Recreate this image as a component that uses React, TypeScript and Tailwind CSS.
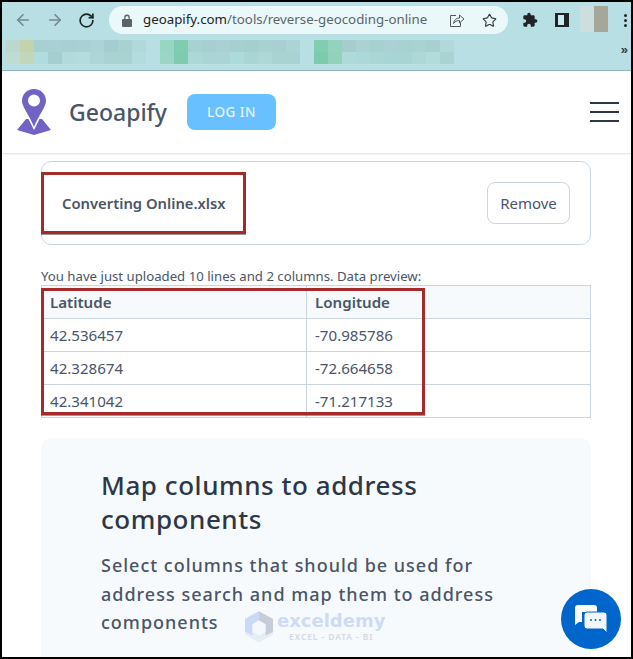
import React from "react";
import { ArrowLeft, ArrowRight, RotateCw, Star } from "lucide-react";

const groups: string[][][] = [
  [
    ["bg-[#bcd6d0]", "bg-[#c5d2ae]", "bg-[#a8d0d2]", "bg-[#a9d1d3]", "bg-[#a8cfd2]", "bg-[#a9d0d2]", "bg-[#acd4d6]", "bg-[#a3cdd0]", "bg-[#a9d1d3]", "bg-[#b0d9db]"],
    ["bg-[#bcdcd4]", "bg-[#c2d6bc]", "bg-[#b0dcdf]", "bg-[#a4ced0]", "bg-[#b2dadc]", "bg-[#b2dcdd]", "bg-[#aed6d8]", "bg-[#a9d2d3]", "bg-[#a9d2d3]", "bg-[#b3dcdf]"],
  ],
  [
    ["bg-[#98d6c4]", "bg-[#80ccb0]", "bg-[#a8d2d2]", "bg-[#a5cfd0]", "bg-[#a9d0d2]", "bg-[#a6cfd0]", "bg-[#a5cecf]", "bg-[#a8d1d1]", "bg-[#a8d0d2]", "bg-[#abd4d4]"],
    ["bg-[#9ad5c5]", "bg-[#7ecbb0]", "bg-[#acd8d8]", "bg-[#aad4d5]", "bg-[#aad4d5]", "bg-[#addada]", "bg-[#a9d5d4]", "bg-[#aed8d8]", "bg-[#a9d3d3]", "bg-[#a9d3d3]"],
  ],
  [
    ["bg-[#80cdb0]", "bg-[#93d2bc]", "bg-[#a6cccd]", "bg-[#abd2d3]", "bg-[#a7d0d1]", "bg-[#aad1d3]", "bg-[#a8d1d2]", "bg-[#a9d2d2]", "bg-[#a7d0d1]", "bg-[#b1d9dc]"],
    ["bg-[#7ccbae]", "bg-[#92d1bb]", "bg-[#aedada]", "bg-[#abd8d8]", "bg-[#aad6d6]", "bg-[#a9d4d5]", "bg-[#a9d4d4]", "bg-[#aed8d8]", "bg-[#b1dcdc]", "bg-[#a9d3d3]"],
  ],
];

const rows = [
  ["42.536457", "-70.985786"],
  ["42.328674", "-72.664658"],
  ["42.341042", "-71.217133"],
];

function Toolbar() {
  return (
    <div className="flex h-[32px] items-start bg-[#b8e0e4] pt-[4px]">
      <div className="flex h-[28px] w-[107px] shrink-0 items-center pl-[12px]">
        <ArrowLeft size={18} strokeWidth={2.2} className="text-[#74898e]" />
        <ArrowRight size={18} strokeWidth={2.2} className="ml-[14px] text-[#74898e]" />
        <RotateCw size={17} strokeWidth={2.4} className="ml-[14px] text-[#1f2426]" />
      </div>
      <div className="flex h-[28px] w-[399px] shrink-0 items-center rounded-full bg-[#ebf8f9] pl-[13px] pr-[11px]">
        <svg width="10" height="13" viewBox="0 0 10 13" className="shrink-0">
          <path d="M2.2 5V3.4a2.8 2.8 0 0 1 5.6 0V5H9a1 1 0 0 1 1 1v6a1 1 0 0 1-1 1H1a1 1 0 0 1-1-1V6a1 1 0 0 1 1-1zM3.5 5h3V3.4a1.5 1.5 0 0 0-3 0z" fill="#5b6366" />
        </svg>
        <span className="ml-[11px] whitespace-nowrap font-['Noto_Sans',sans-serif] text-[13.3px] text-[#5a6568]">
          <span className="text-[#1d2224]">geoapify.com</span>/tools/reverse-geocoding-online
        </span>
        <svg width="16" height="16" viewBox="0 0 16 15" fill="none" stroke="#4f585b" strokeWidth="1" className="ml-auto">
          <path d="M7 3H1.500v11h10V10" />
          <path d="M4.500 11c.3-3.500 3-5.500 6-5.500V2.500L15 6.500l-4.500 4V8c-2.500 0-4.500 1-6 3z" />
        </svg>
        <Star size={15} strokeWidth={1.8} className="ml-[17px] text-[#30383a]" />
      </div>
      <div className="flex h-[28px] flex-1 items-center">
        <svg width="16" height="16" viewBox="0 0 24 24" className="ml-[14px] shrink-0">
          <path d="M20.500 11H19V7c0-1.100-.9-2-2-2h-4V3.500C13 2.120 11.880 1 10.500 1S8 2.120 8 3.500V5H4c-1.100 0-1.990.9-1.990 2v3.800H3.500c1.490 0 2.700 1.210 2.700 2.700s-1.210 2.700-2.700 2.700H2V20c0 1.100.9 2 2 2h3.800v-1.500c0-1.490 1.210-2.700 2.700-2.700 1.490 0 2.700 1.210 2.700 2.700V22H17c1.100 0 2-.9 2-2v-4h1.500c1.380 0 2.500-1.120 2.500-2.500S21.880 11 20.500 11z" fill="#202426" />
        </svg>
        <div className="ml-[17px] h-[14px] w-[14px] shrink-0 border-2 border-l-[3px] border-r-[5px] border-[#202426] bg-[#c8ecf0]" />
        <div className="ml-[11px] flex h-[26px] w-[28px] self-start">
          <div className="w-[14px] bg-[#ccdedd]" />
          <div className="w-[14px] bg-[#a4a79a]" />
        </div>
        <div className="ml-[16px] flex flex-col gap-[2px]">
          <div className="h-[3px] w-[3px] rounded-full bg-[#202426]" />
          <div className="h-[3px] w-[3px] rounded-full bg-[#202426]" />
          <div className="h-[3px] w-[3px] rounded-full bg-[#202426]" />
        </div>
      </div>
    </div>
  );
}

function Bookmarks() {
  return (
    <div className="flex h-[37px] items-start border-b border-[#8fb4b9] bg-[#b8e0e4] pl-[4px] pt-[6px]">
      <div className="flex gap-[14px]">
        {groups.map((g, i) => (
          <div key={i} className="flex flex-col">
            {g.map((r, j) => (
              <div key={j} className="flex">
                {r.map((c, k) => (
                  <div key={k} className={`h-[12px] w-[14px] ${c}`} />
                ))}
              </div>
            ))}
          </div>
        ))}
      </div>
      <span className="ml-auto mr-[3px] mt-[3px] font-['Liberation_Sans',sans-serif] text-[13px] font-bold leading-[14px] text-[#30383a]">»</span>
    </div>
  );
}

function Header() {
  return (
    <div className="flex h-[83px] items-center border-b border-[#e6e7e8] bg-white pl-[15px] pr-[12px] shadow-[0_1px_2px_rgba(0,0,0,0.05)]">
      <svg width="34" height="46" viewBox="0 0 34 46" className="shrink-0">
        <path fillRule="evenodd" d="M17 0C10 0 5 5.400 5 12c0 6 8 15 12 26 4-11 12-20 12-26C29 5.400 24 0 17 0zm0 5.500a6 6 0 1 1 0 12 6 6 0 0 1 0-12z" fill="#7162c6" />
        <path d="M9 30 0 41l17 5 17-5-9-11-2.500 0L17 41l-5.500-11z" fill="#7162c6" />
      </svg>
      <span className="ml-[18px] w-[98px] whitespace-nowrap font-['Noto_Sans',sans-serif] text-[23px] font-medium leading-none text-[#4a5568]">Geoapify</span>
      <button className="ml-[20px] h-[36px] w-[89px] rounded-[8px] bg-[#68c0ff] font-['Noto_Sans',sans-serif] text-[13.5px] font-medium tracking-[0.5px] text-[#e6f3fd]">LOG IN</button>
      <div className="ml-auto flex w-[29px] flex-col gap-[7px]">
        <div className="h-[2px] bg-[#2d3748]" />
        <div className="h-[2px] bg-[#2d3748]" />
        <div className="h-[2px] bg-[#2d3748]" />
      </div>
    </div>
  );
}

export default function App() {
  return (
    <div className="relative flex h-[659px] w-[633px] flex-col overflow-hidden border-2 border-black bg-white font-['Noto_Sans',sans-serif] text-[#4a5568]">
      <Toolbar />
      <Bookmarks />
      <Header />
      <div className="flex flex-1 flex-col pl-[39px] pr-[40px] pt-[7px]">
        <div className="relative flex h-[84px] shrink-0 items-center justify-between rounded-[10px] border border-[#cbd5e0] px-[20px]">
          <span className="text-[14.8px] font-semibold">Converting Online.xlsx</span>
          <button className="h-[42px] w-[83px] rounded-[8px] border border-[#cbd5e0] text-[15px]">Remove</button>
          <div className="absolute left-[-1px] top-[10px] h-[62px] w-[205px] border-[3px] border-[#a52a2a] shadow-[0_1px_0_rgba(0,0,0,0.4)]" />
        </div>
        <div className="relative mt-[22px]">
          <p className="h-[18px] whitespace-nowrap text-[13.2px] leading-[18px]">You have just uploaded 10 lines and 2 columns. Data preview:</p>
          <table className="w-full table-fixed border-collapse text-[15.1px]">
            <thead>
              <tr className="h-[33px] bg-[#f7fafc]">
                <th className="w-[265px] border border-[#cbd5e0] pl-[8px] text-left font-semibold">Latitude</th>
                <th className="border border-[#cbd5e0] pl-[8px] text-left font-semibold">Longitude</th>
              </tr>
            </thead>
            <tbody>
              {rows.map((r) => (
                <tr key={r[0]} className="h-[33px]">
                  <td className="border border-[#cbd5e0] pl-[8px]">{r[0]}</td>
                  <td className="border border-[#cbd5e0] pl-[8px]">{r[1]}</td>
                </tr>
              ))}
            </tbody>
          </table>
          <div className="absolute left-0 top-[21px] h-[127px] w-[384px] border-[3px] border-[#a52a2a] shadow-[0_1px_0_rgba(0,0,0,0.4)]" />
        </div>
        <div className="mt-[20px] flex-1 rounded-t-[10px] bg-[#f7fafc] pl-[60px] pr-[60px] pt-[30px]">
          <h2 className="text-[26px] font-medium leading-[34px] tracking-[0.55px] text-[#2d3748]">Map columns to address components</h2>
          <p className="mt-[15px] text-[18px] font-medium leading-[28.5px] tracking-[1px]">Select columns that should be used for address search and map them to address components</p>
        </div>
      </div>
      <div className="absolute left-[243px] top-[609px] flex items-center opacity-90">
        <svg width="28" height="32" viewBox="0 0 30 34">
          <path d="M15 0 30 8.500V25L15 34 0 25V8.500z" fill="#e4edf7" />
          <path d="M15 0 0 8.500V22l8 4.500V14l7-4z" fill="#c6d6f6" />
          <path d="M15 0 30 8.500V22l-8 4.500V14l-7-4z" fill="#c2c9d3" />
          <path d="M15 10l7 4v8l-7 4-7-4v-8z" fill="#f4f8fc" />
        </svg>
        <div className="ml-[4px] flex flex-col items-center">
          <span className="h-[18px] font-['DejaVu_Sans',sans-serif] text-[18px] font-bold leading-[18px] text-[#c9d8f8]">exceldemy</span>
          <span className="mt-[2px] h-[10px] whitespace-nowrap text-[8.5px] font-semibold leading-[10px] tracking-[0.9px] text-[#cfd6de]">EXCEL - DATA - BI</span>
        </div>
      </div>
      <div className="absolute left-[559px] top-[587px] flex h-[60px] w-[60px] items-center justify-center rounded-full bg-[#0066cc]">
        <svg width="32" height="28" viewBox="0 0 32 28">
          <path d="M3 0h16a3 3 0 0 1 3 3v4H7v10H4l-4 3V3a3 3 0 0 1 3-3z" fill="#fff" />
          <path d="M12 7h17a3 3 0 0 1 3 3v18l-4-4H12a3 3 0 0 1-3-3V10a3 3 0 0 1 3-3z" fill="#f2f7fd" stroke="#0066cc" strokeWidth="1" />
          <circle cx="16" cy="15" r="1" fill="#0066cc" />
          <circle cx="20.500" cy="15" r="1" fill="#0066cc" />
          <circle cx="25" cy="15" r="1" fill="#0066cc" />
        </svg>
      </div>
    </div>
  );
}
